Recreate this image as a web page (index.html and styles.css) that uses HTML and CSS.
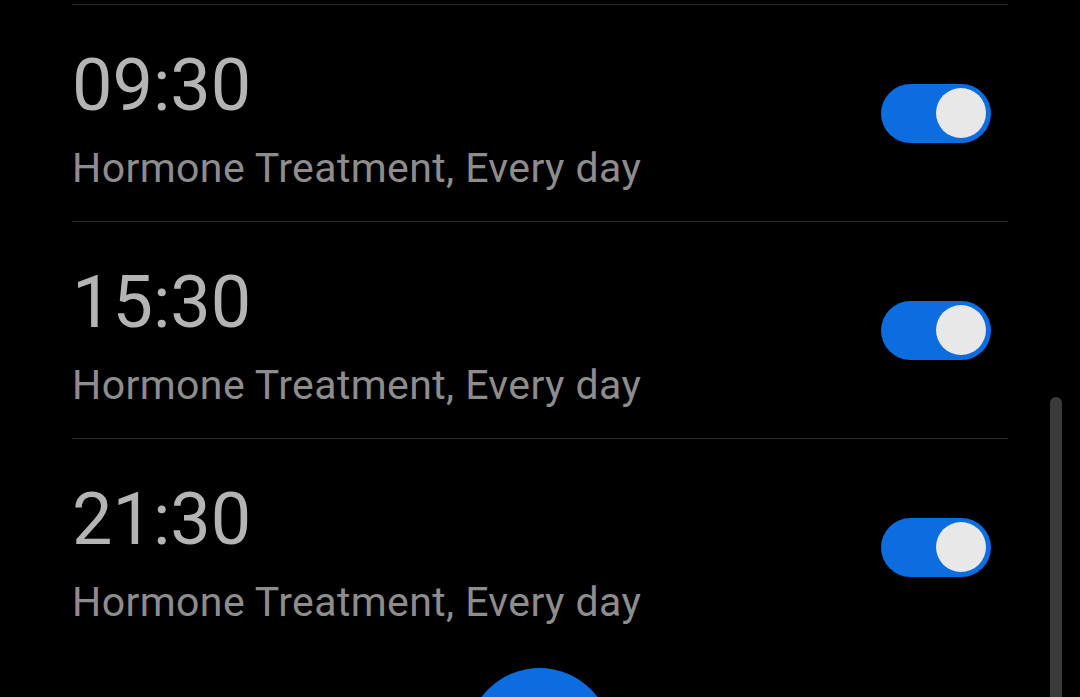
FILE: index.html
```html
<!DOCTYPE html>
<html lang="en">

<head>
  <meta charset="UTF-8">
  <meta name="viewport" content="width=device-width">
  <title>Alarms</title>
  <link rel="stylesheet" href="styles.css">
</head>

<body>

  <ul class="alarms">
    <li class="alarm">
      <div class="alarm-info">
        <p class="alarm-time">09:30</p>
        <p class="alarm-label">Hormone Treatment, Every day</p>
      </div>
      <span class="switch"><span class="knob"></span></span>
    </li>
    <li class="alarm">
      <div class="alarm-info">
        <p class="alarm-time">15:30</p>
        <p class="alarm-label">Hormone Treatment, Every day</p>
      </div>
      <span class="switch"><span class="knob"></span></span>
    </li>
    <li class="alarm">
      <div class="alarm-info">
        <p class="alarm-time">21:30</p>
        <p class="alarm-label">Hormone Treatment, Every day</p>
      </div>
      <span class="switch"><span class="knob"></span></span>
    </li>
  </ul>

  <div class="scrollbar"></div>
  <div class="fab-wrap">
    <button class="fab" type="button"></button>
  </div>

</body>

</html>
```

FILE: styles.css
```css
* {
  box-sizing: border-box;
  margin: 0;
  padding: 0;
}

html,
body {
  height: 100%;
  overflow: hidden;
}

body {
  font-family: Roboto, "Noto Sans", sans-serif;
  background-color: #000;
  position: relative;
}

.alarms {
  list-style: none;
  margin: 4px 72px 0 72px;
}

.alarm {
  display: flex;
  align-items: center;
  justify-content: space-between;
  height: 217px;
  border-top: 1px solid #2a2a2a;
}

.alarm-info {
  padding-top: 11px;
}

.alarm-time {
  font-size: 72px;
  line-height: 72px;
  color: #b4b4b4;
  margin-bottom: 26px;
}

.alarm-label {
  font-size: 41px;
  line-height: 40px;
  letter-spacing: 0.4px;
  color: #8d8d8d;
}

.switch {
  display: flex;
  align-items: center;
  justify-content: flex-end;
  width: 110px;
  height: 59px;
  padding: 0 5px;
  margin-right: 17px;
  border-radius: 30px;
  background-color: #0b6ddf;
}

.knob {
  width: 50px;
  height: 50px;
  border-radius: 50%;
  background-color: #e8e8e8;
}

.scrollbar {
  position: absolute;
  left: 1050px;
  top: 397px;
  width: 12px;
  height: 300px;
  border-radius: 6px 6px 0 0;
  background-color: #3a3a3a;
}

/* only the top of the round add button shows */
.fab-wrap {
  position: absolute;
  left: 467px;
  top: 668px;
  width: 145px;
  height: 29px;
  overflow: hidden;
}

.fab {
  display: block;
  width: 145px;
  height: 145px;
  border: none;
  border-radius: 50%;
  background-color: #0b6ddf;
}
```
